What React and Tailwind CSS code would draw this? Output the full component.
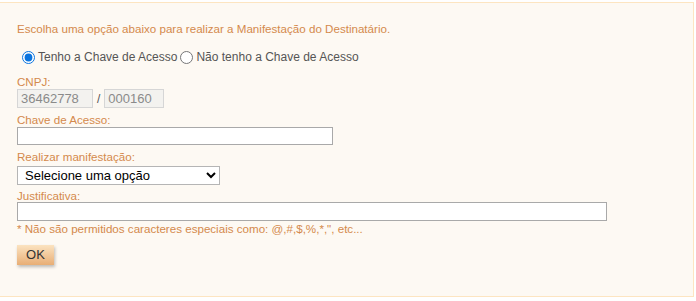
import React, { useState } from 'react';

// Formulário de manifestação do destinatário
const App = () => {
  const [temChave, setTemChave] = useState(true);

  const label = "block text-[11.6px] leading-[14px] text-[#d4894c] font-['Liberation_Sans',sans-serif]";

  return (
    <div className="w-[696px] h-[301px] bg-white pt-[2px]">
      <div className="w-[694px] h-[295px] bg-[#fdf9f3] border-t border-r border-b border-[#fde5c1] pl-[17px] pt-[19px]">
        <p className={label}>Escolha uma opção abaixo para realizar a Manifestação do Destinatário.</p>

        <div className="flex items-center mt-[13px] h-[16px] text-[12px] text-[#555] font-['Liberation_Sans',sans-serif]">
          <label className="flex items-center">
            <input
              type="radio"
              name="chave"
              checked={temChave}
              onChange={() => setTemChave(true)}
              className="w-[13px] h-[13px] ml-[5px] mr-[3px] accent-[#0b74de]"
            />
            Tenho a Chave de Acesso
          </label>
          <label className="flex items-center ml-[3px]">
            <input
              type="radio"
              name="chave"
              checked={!temChave}
              onChange={() => setTemChave(false)}
              className="w-[13px] h-[13px] mr-[3px] accent-[#0b74de]"
            />
            Não tenho a Chave de Acesso
          </label>
        </div>

        <span className={label + ' mt-[10px]'}>CNPJ:</span>
        <div className="flex items-center">
          <input
            readOnly
            value="36462778"
            className="w-[76px] h-[19px] border border-[#d6d6d6] bg-[#f3f2ef] px-[3px] text-[13px] text-[#8a8a8a] font-['Liberation_Sans',sans-serif] outline-none"
          />
          <span className="mx-[4px] text-[12px] text-[#555] font-['Liberation_Sans',sans-serif]">/</span>
          <input
            readOnly
            value="000160"
            className="w-[60px] h-[19px] border border-[#d6d6d6] bg-[#f3f2ef] px-[3px] text-[13px] text-[#8a8a8a] font-['Liberation_Sans',sans-serif] outline-none"
          />
        </div>

        <span className={label + ' mt-[5px]'}>Chave de Acesso:</span>
        <input className="block w-[316px] h-[18px] border border-[#a9a9a9] bg-white outline-none" />

        <span className={label + ' mt-[5px]'}>Realizar manifestação:</span>
        <select className="block mt-[2px] w-[203px] h-[19px] border border-[#b5b5b5] bg-white text-[13px] leading-[17px] text-black pl-[3px] font-['Liberation_Sans',sans-serif] outline-none">
          <option>Selecione uma opção</option>
        </select>

        <span className={label + ' mt-[4px]'}>Justificativa:</span>
        <input className="block mt-[-1px] w-[590px] h-[19px] border border-[#a9a9a9] bg-white outline-none" />
        <span className={label + ' mt-[1px]'}>* Não são permitidos caracteres especiais como: @,#,$,%,*,", etc...</span>

        <button
          type="button"
          className="mt-[9px] w-[37px] h-[20px] bg-gradient-to-b from-[#fbe3c0] to-[#e8ae75] text-[13px] text-[#333] font-['Liberation_Sans',sans-serif] shadow-[1px_2px_3px_rgba(0,0,0,0.25)]"
        >
          OK
        </button>
      </div>
    </div>
  );
};

export default App;
